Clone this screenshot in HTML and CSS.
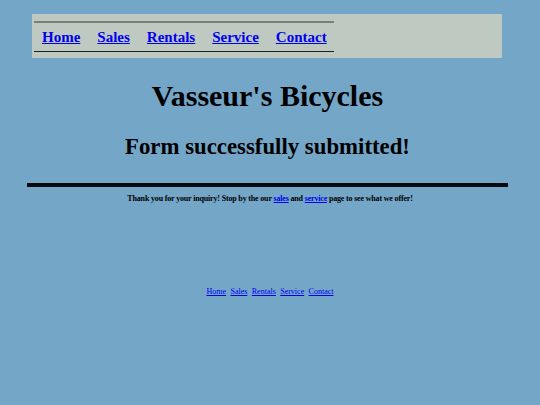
FILE: index.html
```html
<!DOCTYPE html>
<html>
<head>
<meta charset="utf-8">
<title>Vasseur's Bicycles</title>
<link rel="stylesheet" href="styles.css">
</head>
<body>
<div class="page">
  <header class="head">
    <nav class="topnav">
      <ul class="navlist">
        <li><a href="#">Home</a></li>
        <li><a href="#">Sales</a></li>
        <li><a href="#">Rentals</a></li>
        <li><a href="#">Service</a></li>
        <li><a href="#">Contact</a></li>
      </ul>
    </nav>
    <h1 class="title">Vasseur's Bicycles</h1>
    <h2 class="subtitle">Form successfully submitted!</h2>
    <div class="rule"></div>
  </header>
  <p class="message">Thank you for your inquiry! Stop by the our <a href="#">sales</a> and <a href="#">service</a> page to see what we offer!</p>
  <footer class="footnav">
    <a href="#">Home</a>
    <a href="#">Sales</a>
    <a href="#">Rentals</a>
    <a href="#">Service</a>
    <a href="#">Contact</a>
  </footer>
</div>
</body>
</html>
```
FILE: styles.css
```css
html, body {
  margin: 0;
  padding: 0;
}
body {
  background: #74a6c8;
  font-family: "Liberation Serif", "Times New Roman", serif;
  color: #000;
}
.page {
  padding-top: 14px;
}
.head {
  width: 481px;
  margin-left: 27px;
}
.topnav {
  margin-left: 5px;
  width: 470px;
  height: 44px;
  background: #bec9c1;
  box-sizing: border-box;
  padding-top: 7px;
  padding-left: 2px;
}
.navlist {
  list-style: none;
  margin: 0;
  padding: 0 0 0 8px;
  width: 292px;
  height: 28px;
  display: flex;
  align-items: center;
  gap: 17px;
  border-top: 2px solid #7a7f7b;
  border-bottom: 1px solid #1e211f;
}
.navlist a {
  color: #0000ee;
  font-weight: bold;
  font-size: 15px;
}
.title {
  margin: 22px 0 0 0;
  text-align: center;
  font-size: 30px;
  font-weight: bold;
  line-height: 32px;
}
.subtitle {
  margin: 21px 0 0 0;
  text-align: center;
  font-size: 22.8px;
  font-weight: bold;
  line-height: 28px;
}
.rule {
  margin-top: 22px;
  height: 4px;
  background: #050a10;
}
.message {
  margin: 6px 8px 0 8px;
  text-align: center;
  font-size: 8px;
  letter-spacing: -0.17px;
  font-weight: bold;
  line-height: 12px;
}
.message a {
  color: #0000ee;
}
.footnav {
  margin: 81px 8px 0 8px;
  text-align: center;
  font-size: 8px;
  line-height: 12px;
  word-spacing: 2.4px;
}
.footnav a {
  color: #0000ee;
}
```
